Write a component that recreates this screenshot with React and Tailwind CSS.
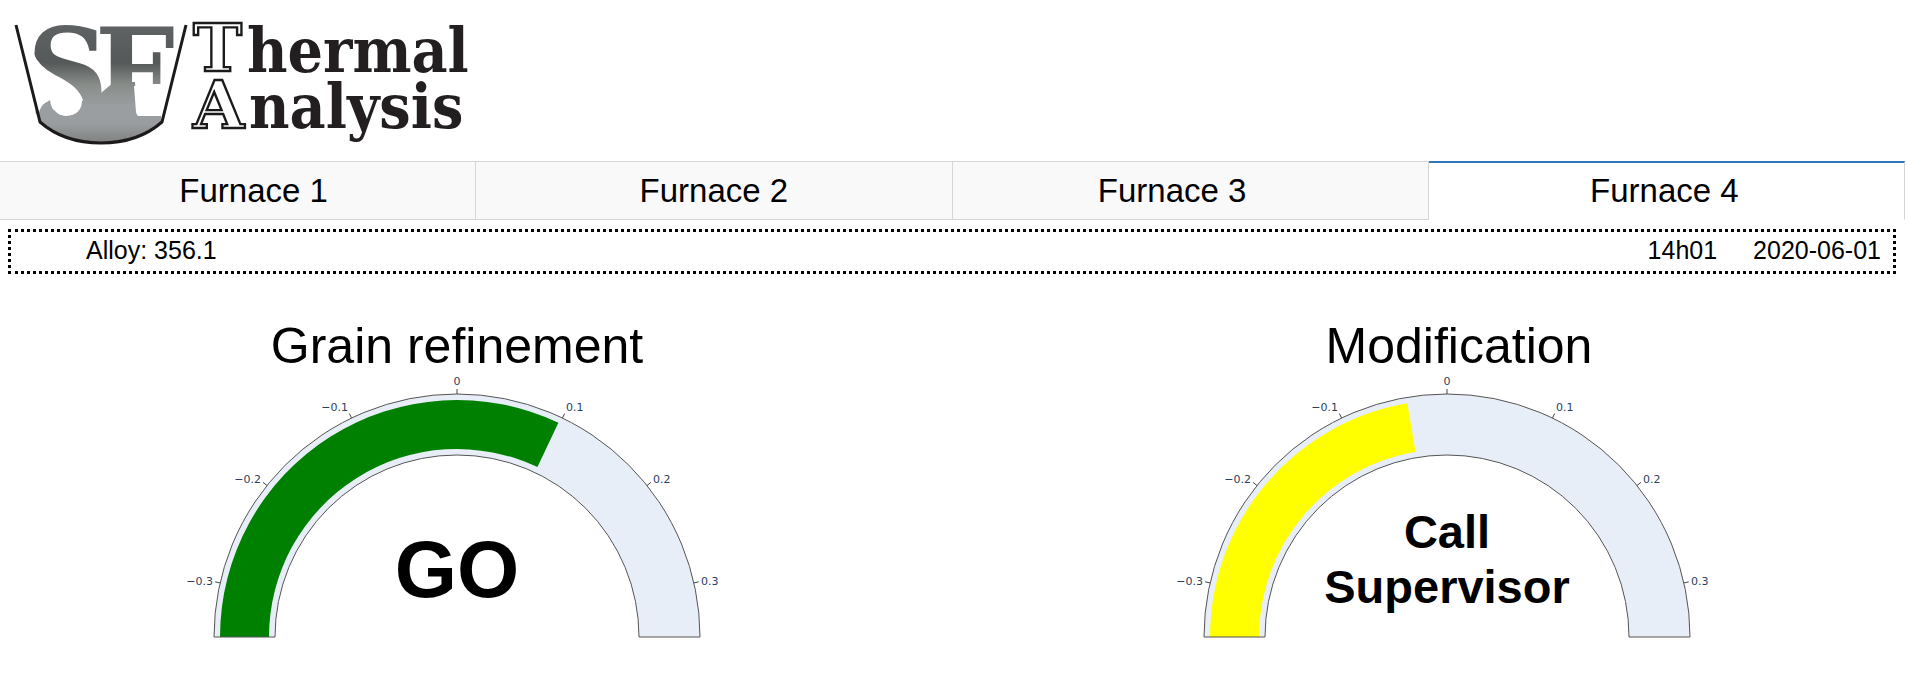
import React from "react";

const CX = 300;
const CY = 263;
const R_OUTER = 243;
const R_INNER = 182;
const MAX = 0.35;

const point = (radius, value) => {
  const angle = (value / MAX) * (Math.PI / 2);
  return [CX + radius * Math.sin(angle), CY - radius * Math.cos(angle)];
};

const ring = (inner, outer, value) => {
  const [ox, oy] = point(outer, value);
  const [ix, iy] = point(inner, value);
  return [
    `M${CX - outer} ${CY}`,
    `A${outer} ${outer} 0 0 1 ${ox} ${oy}`,
    `L${ix} ${iy}`,
    `A${inner} ${inner} 0 0 0 ${CX - inner} ${CY}`,
    "Z",
  ].join(" ");
};

const ticks = [
  { value: -0.3, label: "−0.3", dx: -244, dy: -52, anchor: "end" },
  { value: -0.2, label: "−0.2", dx: -196, dy: -154, anchor: "end" },
  { value: -0.1, label: "−0.1", dx: -109, dy: -226, anchor: "end" },
  { value: 0, label: "0", dx: 0, dy: -252, anchor: "middle" },
  { value: 0.1, label: "0.1", dx: 109, dy: -226, anchor: "start" },
  { value: 0.2, label: "0.2", dx: 196, dy: -154, anchor: "start" },
  { value: 0.3, label: "0.3", dx: 244, dy: -52, anchor: "start" },
];

function Gauge({ title, titleClass, value, color, children }) {
  return (
    <section className="flex flex-col items-center">
      <h2 className={`text-[50px] leading-14 ${titleClass}`}>{title}</h2>
      <svg viewBox="0 0 600 266" className="w-[600px] max-w-full" role="img" aria-label={title}>
        <path d={ring(R_INNER, R_OUTER, MAX)} fill="#e8eef7" />
        <path d={ring(188, 237, value)} fill={color} />
        <path d={ring(R_INNER, R_OUTER, MAX)} fill="none" stroke="#555" strokeWidth="1" />
        {ticks.map((t) => {
          const [x1, y1] = point(R_OUTER, t.value);
          const [x2, y2] = point(R_OUTER + 5, t.value);
          return (
            <g key={t.label}>
              <line x1={x1} y1={y1} x2={x2} y2={y2} stroke="#444" strokeWidth="1" />
              <text
                x={CX + t.dx}
                y={CY + t.dy}
                textAnchor={t.anchor}
                fill="#2a3f5f"
                className="font-['DejaVu_Sans',sans-serif] text-[11px]"
              >
                {t.label}
              </text>
            </g>
          );
        })}
        {children}
      </svg>
    </section>
  );
}

function Logo() {
  return (
    <svg viewBox="0 0 480 161" className="h-[161px] w-[480px] max-w-full" role="img" aria-label="Thermal Analysis">
      <defs>
        <linearGradient id="metal" gradientUnits="userSpaceOnUse" x1="0" y1="22" x2="0" y2="142">
          <stop offset="0" stopColor="#5f6364" />
          <stop offset="0.34" stopColor="#555959" />
          <stop offset="0.52" stopColor="#888c89" />
          <stop offset="0.7" stopColor="#9b9ea1" />
          <stop offset="0.85" stopColor="#9a9da0" />
          <stop offset="1" stopColor="#7f827e" />
        </linearGradient>
      </defs>
      <g fill="url(#metal)" className="font-['DejaVu_Serif_Condensed','DejaVu_Serif',serif] text-[125px] font-bold">
        <text x="27" y="118">S</text>
        <text x="95" y="118">F</text>
        {/* molten metal running from the letters into the pool */}
        <path d="M52 54Q66 62 78 68Q98 80 101 93L114 82H135L137 118H66L83 100Q78 86 55 75Z" />
      </g>
      {/* open space inside the crucible */}
      <path d="M33 52Q38 66 55 75Q80 87 82 100Q82 115 66 116Q54 116 50 100Q42 103 39 112L26 70Z" fill="#fff" />
      <path d="M134 86H170L162 117H141Q137 117 136 112Z" fill="#fff" />
      <path d="M39 118Q40 105 50 100Q52 116 66 116H161L162 122Q136 142 101 142Q66 142 40 122Z" fill="url(#metal)" />
      <path d="M16 25L40 122Q64 143 101 143Q138 143 162 122L186 25" fill="none" stroke="#1c1a1b" strokeWidth="3" />
      <g fill="#fff" stroke="#1c1a1b" strokeWidth="2.4" className="font-['DejaVu_Serif',serif] text-[66px] font-bold">
        <text x="193" y="71">T</text>
        <text x="193" y="128">A</text>
      </g>
      <g fill="#231f20" className="font-['DejaVu_Serif_Condensed','DejaVu_Serif',serif] text-[62px] font-bold">
        <text x="247" y="72">hermal</text>
        <text x="249" y="128">nalysis</text>
      </g>
    </svg>
  );
}

const tabs = [
  { name: "Furnace 1", pad: "pl-8" },
  { name: "Furnace 2", pad: "" },
  { name: "Furnace 3", pad: "pr-9" },
  { name: "Furnace 4", pad: "pr-1", active: true },
];

export default function App() {
  return (
    <div className="min-h-screen bg-white font-['Liberation_Sans',Arial,sans-serif] text-black">
      <header className="flex">
        <Logo />
      </header>
      <div role="tablist" className="mr-px grid grid-cols-4">
        {tabs.map((tab) => (
          <button
            key={tab.name}
            type="button"
            role="tab"
            aria-selected={Boolean(tab.active)}
            className={`h-[59px] border-r border-b border-r-[#d6d6d6] text-[33px] leading-10 ${tab.pad} ${
              tab.active
                ? "border-t-2 border-t-[#3275bd] border-b-transparent bg-white"
                : "border-t border-t-[#d6d6d6] border-b-[#d6d6d6] bg-[#f9f9f9]"
            }`}
          >
            {tab.name}
          </button>
        ))}
      </div>
      <div className="mt-[9px] mr-[10px] ml-2 flex h-[45px] items-center justify-between border-3 border-dotted border-black pr-3 pb-1 pl-[75px] text-[25px] leading-8">
        <span>Alloy: 356.1</span>
        <div className="flex gap-9">
          <span>14h01</span>
          <span>2020-06-01</span>
        </div>
      </div>
      <main className="mt-11 grid grid-cols-2 gap-19 pr-0.5">
        <Gauge title="Grain refinement" titleClass="" value={0.0985} color="#008000">
          <text x={CX} y={CY - 40} textAnchor="middle" className="text-[80px] font-bold">
            GO
          </text>
        </Gauge>
        <Gauge title="Modification" titleClass="pl-6" value={-0.0375} color="#ffff00">
          <text textAnchor="middle" className="text-[47px] font-bold">
            <tspan x={CX} y={CY - 89}>Call</tspan>
            <tspan x={CX} y={CY - 34}>Supervisor</tspan>
          </text>
        </Gauge>
      </main>
    </div>
  );
}
